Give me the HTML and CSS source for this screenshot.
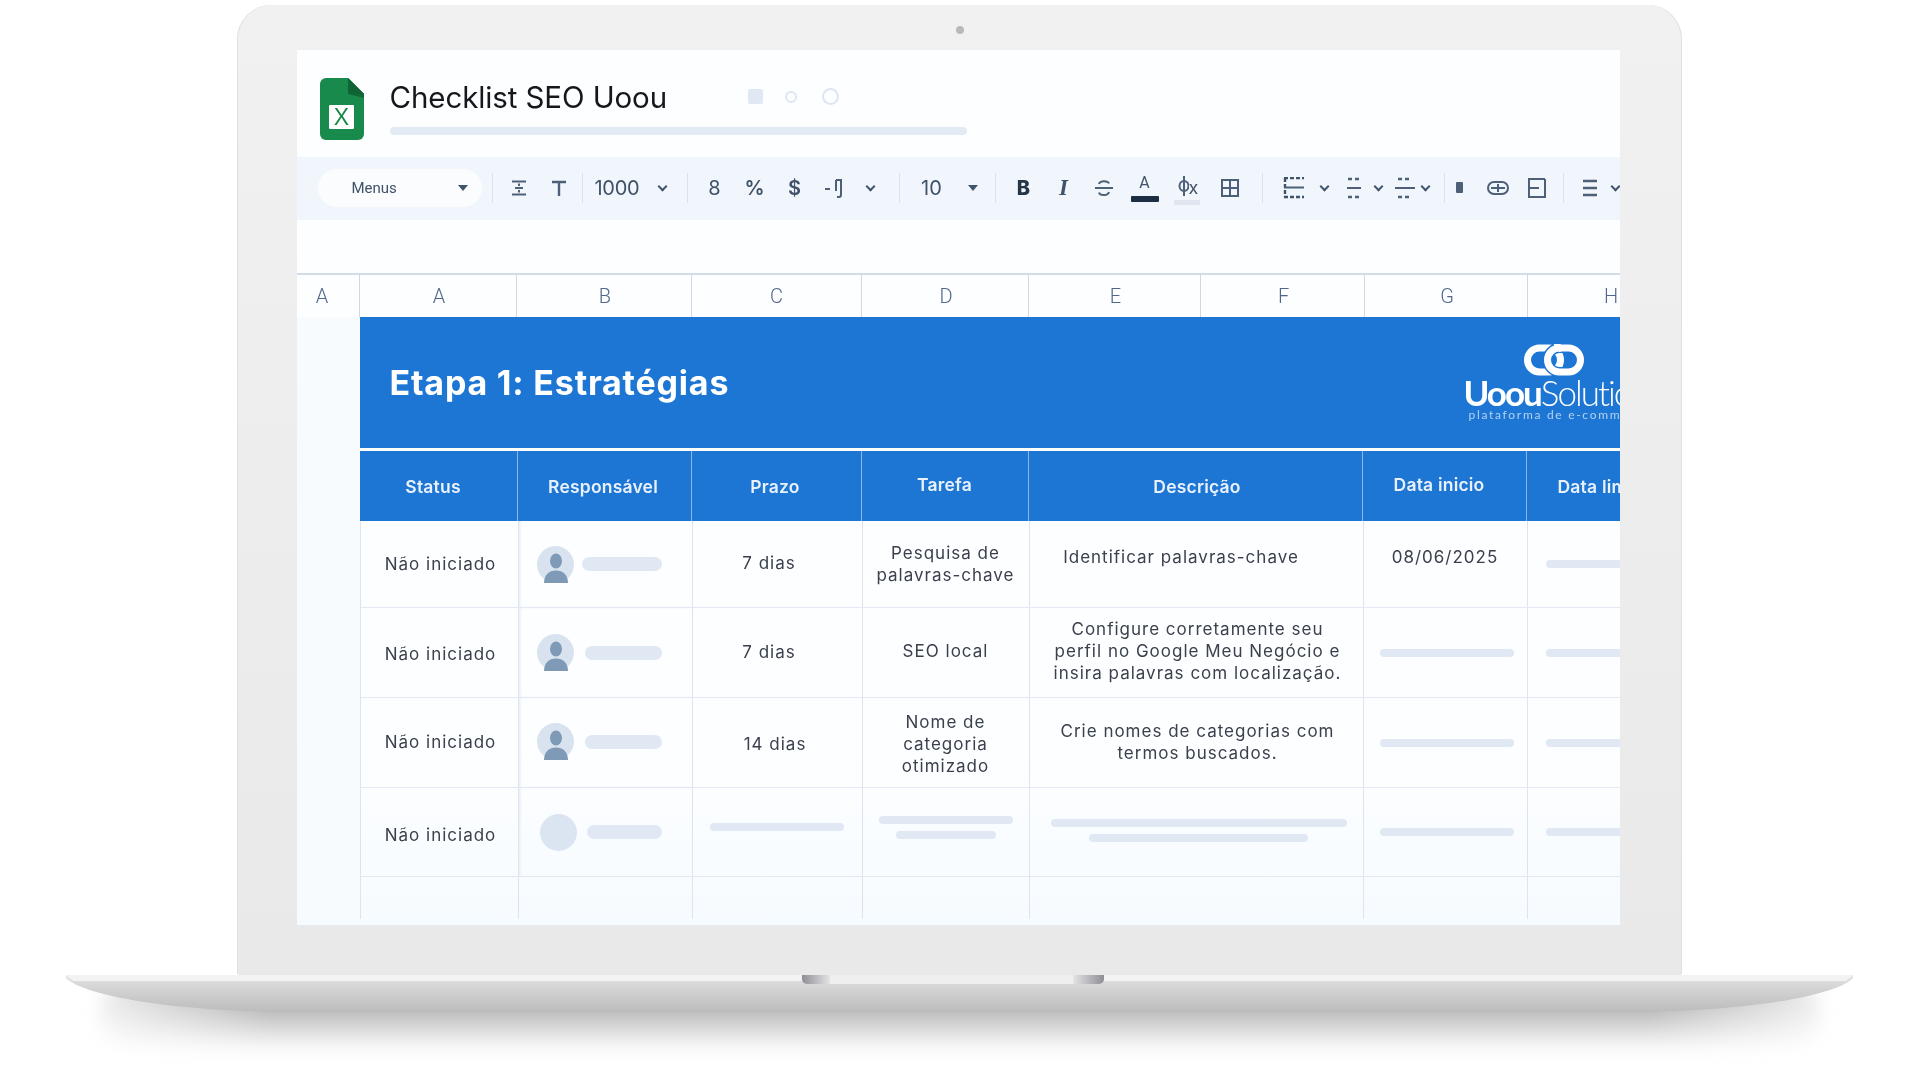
FILE: index.html
```html
<!DOCTYPE html>
<html lang="en">
<head>
    <meta charset="UTF-8">
    <title>Checklist SEO Uoou</title>
    <link rel="stylesheet" href="styles.css">
</head>
<body>
    <div class="laptop">
        <div class="lid">
            <div class="camera"></div>
            <div class="screen">
                <div class="title-row">
                    <svg class="sheet-icon" width="44" height="62" viewBox="0 0 44 62">
                        <path d="M6 0H28L44 16V56a6 6 0 0 1-6 6H6a6 6 0 0 1-6-6V6a6 6 0 0 1 6-6z" fill="#188a4b"/>
                        <path d="M28 0L44 16V20L28 16z" fill="#106a38"/>
                        <path d="M28 0L44 16H31a3 3 0 0 1-3-3z" fill="#0f6334"/>
                        <rect x="9" y="27" width="25" height="24" rx="1" fill="#fff"/>
                        <text x="21.500" y="47" text-anchor="middle" class="sheet-x">X</text>
                    </svg>
                    <div class="title-text">
                        <div class="title-line">
                            <h1>Checklist SEO Uoou</h1>
                            <span class="doc-square"></span>
                            <span class="doc-dot"></span>
                            <span class="doc-ring"></span>
                        </div>
                        <div class="menu-bar"></div>
                    </div>
                </div>

                <div class="toolbar">
                    <div class="pill">Menus<span class="caret"></span></div>
                    <span class="sep ml10"></span>
                    <span class="tool ml6">
                        <svg width="18" height="18" viewBox="0 0 18 18"><path d="M2 2.500H16M2 15.500H16M5 9H13M9 4.500V7M9 13.500V11" stroke="#4d6077" stroke-width="2" fill="none"/></svg>
                    </span>
                    <span class="tool">
                        <svg width="18" height="18" viewBox="0 0 18 18"><path d="M2 3H16M9 3V17" stroke="#4d6077" stroke-width="2.400" fill="none"/></svg>
                    </span>
                    <span class="sep ml3"></span>
                    <span class="num num-wide ml12">1000</span>
                    <span class="chev w16 ml8"></span>
                    <span class="sep ml16"></span>
                    <span class="tool txt ml7">8</span>
                    <span class="tool txt bold">%</span>
                    <span class="tool txt bold">$</span>
                    <span class="tool">
                        <svg width="22" height="20" viewBox="0 0 22 20"><path d="M1 11H6M12 2H17V17a2 2 0 0 1-2 2H13M12 2V13" stroke="#4d6077" stroke-width="2" fill="none"/></svg>
                    </span>
                    <span class="chev w16 ml8"></span>
                    <span class="sep ml20"></span>
                    <span class="tool txt ml12">10</span>
                    <span class="caret w16 ml13"></span>
                    <span class="sep ml14"></span>
                    <span class="tool txt strong ml8">B</span>
                    <span class="tool txt italic">I</span>
                    <span class="tool">
                        <svg width="20" height="22" viewBox="0 0 20 22"><path d="M1 11H19M15 6.500C14 3.500 6 3 5 7M5 15.500C6 19 14 19 15 15" stroke="#4d6077" stroke-width="2" fill="none"/></svg>
                    </span>
                    <span class="tool color-a w42">A</span>
                    <span class="tool w44 fx">
                        <svg width="12" height="24" viewBox="0 0 12 24"><ellipse cx="7" cy="10" rx="4.500" ry="5" fill="none" stroke="#4d6077" stroke-width="2"/><path d="M7 0V20" stroke="#4d6077" stroke-width="2"/></svg>x
                    </span>
                    <span class="tool">
                        <svg width="20" height="20" viewBox="0 0 20 20"><path d="M2 2H18V18H2zM10 2V18M2 10H18" stroke="#4d6077" stroke-width="2" fill="none"/></svg>
                    </span>
                    <span class="sep ml12"></span>
                    <span class="tool ml11">
                        <svg width="22" height="22" viewBox="0 0 22 22"><path d="M1 1H21M1 20H21M2 1V20" stroke="#3f5268" stroke-width="2.400" stroke-dasharray="4 2" fill="none"/><path d="M1 10.500H21" stroke="#4d6077" stroke-width="2"/></svg>
                    </span>
                    <span class="chev w16 ml3"></span>
                    <span class="tool w36 ml3">
                        <svg width="14" height="22" viewBox="0 0 14 22"><path d="M1 2H13M1 20H13" stroke="#4d6077" stroke-width="2.400" stroke-dasharray="4 3" fill="none"/><path d="M0 11H14" stroke="#4d6077" stroke-width="2"/></svg>
                    </span>
                    <span class="chev w14"></span>
                    <span class="tool w30 ml4">
                        <svg width="20" height="22" viewBox="0 0 20 22"><path d="M3 2H17M3 20H17" stroke="#4d6077" stroke-width="2.400" stroke-dasharray="4 3" fill="none"/><path d="M0 11H20" stroke="#4d6077" stroke-width="2"/></svg>
                    </span>
                    <span class="chev w12"></span>
                    <span class="sep ml12"></span>
                    <span class="tool w30"><span class="small-square"></span></span>
                    <span class="tool w46">
                        <svg width="22" height="16" viewBox="0 0 22 16"><rect x="1" y="2" width="20" height="12" rx="6" fill="none" stroke="#4d6077" stroke-width="2"/><path d="M4 8H18M11 4V12" stroke="#4d6077" stroke-width="2" fill="none"/></svg>
                    </span>
                    <span class="tool w32">
                        <svg width="18" height="20" viewBox="0 0 18 20"><path d="M17 1H1V19H17V1M1 10H11" stroke="#4d6077" stroke-width="2" fill="none"/></svg>
                    </span>
                    <span class="sep ml10"></span>
                    <span class="tool ml6">
                        <svg width="16" height="18" viewBox="0 0 16 18"><path d="M1 2H15M1 9H15M1 16H15" stroke="#4d6077" stroke-width="2.400" fill="none"/></svg>
                    </span>
                    <span class="chev w12"></span>
                </div>

                <div class="formula"></div>

                <div class="col-letters">
                    <div class="corner">A</div><div>A</div><div>B</div><div class="pr2">C</div><div>D</div><div>E</div><div>F</div><div>G</div><div>H</div>
                </div>

                <div class="sheet">
                    <div class="side"></div>
                    <div class="main">
                        <div class="banner">
                            <h2>Etapa 1: Estratégias</h2>
                            <div class="brand">
                                <svg class="rings" width="60" height="32" viewBox="0 0 60 32">
                                    <rect x="3.500" y="4" width="33" height="24" rx="12" fill="none" stroke="#fff" stroke-width="7"/>
                                    <rect x="23.500" y="4" width="33" height="24" rx="12" fill="none" stroke="#1d76d4" stroke-width="10"/>
                                    <rect x="23.500" y="4" width="33" height="24" rx="12" fill="none" stroke="#fff" stroke-width="7"/>
                                    <path d="M30 1.500C34 1 36 3 38 7" fill="none" stroke="#fff" stroke-width="6"/>
                                </svg>
                                <div class="brand-name"><b>Uoou</b>Solutions</div>
                                <div class="brand-sub">plataforma de e-commerce</div>
                            </div>
                        </div>

                        <div class="row head">
                            <div class="cell pr10 pt1">Status</div>
                            <div class="cell pr2 pt2">Responsável</div>
                            <div class="cell pr2 pt2">Prazo</div>
                            <div class="cell pb3">Tarefa</div>
                            <div class="cell pl4 pt1">Descrição</div>
                            <div class="cell pr10 pb3">Data inicio</div>
                            <div class="cell left pt2">Data limite</div>
                        </div>

                        <div class="row r87">
                            <div class="cell pb1 pl3">Não iniciado</div>
                            <div class="cell person">
                                <svg class="avatar" viewBox="0 0 37 37"><use href="#face"/></svg>
                                <span class="bar name-long"></span>
                            </div>
                            <div class="cell pr16 pb3">7 dias</div>
                            <div class="cell">Pesquisa de<br>palavras-chave</div>
                            <div class="cell pr30 pb14">Identificar palavras-chave</div>
                            <div class="cell pb14">08/06/2025</div>
                            <div class="cell left"><span class="bar end"></span></div>
                        </div>

                        <div class="row r90">
                            <div class="cell pt3 pl3">Não iniciado</div>
                            <div class="cell person">
                                <svg class="avatar" viewBox="0 0 37 37"><use href="#face"/></svg>
                                <span class="bar name"></span>
                            </div>
                            <div class="cell pr16 pb1">7 dias</div>
                            <div class="cell pb3">SEO local</div>
                            <div class="cell pb3 pl3">Configure corretamente seu<br>perfil no Google Meu Negócio e<br>insira palavras com localização.</div>
                            <div class="cell pl4"><span class="bar date"></span></div>
                            <div class="cell left"><span class="bar end"></span></div>
                        </div>

                        <div class="row r90">
                            <div class="cell pb2 pl3">Não iniciado</div>
                            <div class="cell person pb2">
                                <svg class="avatar" viewBox="0 0 37 37"><use href="#face"/></svg>
                                <span class="bar name"></span>
                            </div>
                            <div class="cell pr4 pt2">14 dias</div>
                            <div class="cell pt2">Nome de<br>categoria<br>otimizado</div>
                            <div class="cell pb2 pl3">Crie nomes de categorias com<br>termos buscados.</div>
                            <div class="cell pl4"><span class="bar date"></span></div>
                            <div class="cell left"><span class="bar end"></span></div>
                        </div>

                        <div class="row r89">
                            <div class="cell pt5 pl3">Não iniciado</div>
                            <div class="cell person person-empty">
                                <span class="avatar-empty"></span>
                                <span class="bar name-short"></span>
                            </div>
                            <div class="cell pb10"><span class="bar prazo"></span></div>
                            <div class="cell stack pb10"><span class="bar t1"></span><span class="bar t2"></span></div>
                            <div class="cell stack pb4 pl5"><span class="bar d1"></span><span class="bar d2"></span></div>
                            <div class="cell pl4"><span class="bar date"></span></div>
                            <div class="cell left"><span class="bar end"></span></div>
                        </div>

                        <div class="row r48 blank">
                            <div class="cell"></div><div class="cell"></div><div class="cell"></div><div class="cell"></div><div class="cell"></div><div class="cell"></div><div class="cell"></div>
                        </div>
                    </div>
                </div>
            </div>
        </div>

        <svg class="base" width="1920" height="105" viewBox="0 0 1920 105">
            <defs>
                <linearGradient id="baseFill" x1="0" y1="0" x2="0" y2="1">
                    <stop offset="0" stop-color="#e6e6e6"/>
                    <stop offset=".25" stop-color="#d8d8d8"/>
                    <stop offset="1" stop-color="#bcbcbc"/>
                </linearGradient>
                <linearGradient id="shadowFill" x1="0" y1="0" x2="0" y2="1">
                    <stop offset="0" stop-color="#969696"/>
                    <stop offset=".5" stop-color="#c8c8c8"/>
                    <stop offset="1" stop-color="#ffffff"/>
                </linearGradient>
                <linearGradient id="edgeFade" x1="0" y1="0" x2="1" y2="0">
                    <stop offset=".03" stop-color="#000"/>
                    <stop offset=".14" stop-color="#fff"/>
                    <stop offset=".86" stop-color="#fff"/>
                    <stop offset=".97" stop-color="#000"/>
                </linearGradient>
                <mask id="shadowMask" maskUnits="userSpaceOnUse" x="0" y="0" width="1920" height="105">
                    <rect width="1920" height="105" fill="url(#edgeFade)"/>
                </mask>
                <linearGradient id="notchLeft" x1="0" y1="0" x2="1" y2="0">
                    <stop offset="0" stop-color="#8e8e96"/>
                    <stop offset="1" stop-color="#e4e4e6"/>
                </linearGradient>
                <linearGradient id="notchRight" x1="0" y1="0" x2="1" y2="0">
                    <stop offset="0" stop-color="#e4e4e6"/>
                    <stop offset="1" stop-color="#8e8e96"/>
                </linearGradient>
                <filter id="soft" x="-5%" y="-60%" width="110%" height="220%">
                    <feGaussianBlur stdDeviation="9"/>
                </filter>
            </defs>
            <g mask="url(#shadowMask)">
                <path d="M115 10H1805C1840 30 1820 76 1780 76H140C100 76 80 30 115 10z" fill="url(#shadowFill)" filter="url(#soft)"/>
            </g>
            <path d="M66 0H1853V3C1840 18 1760 37 1622 37H300C160 37 80 18 66 3z" fill="url(#baseFill)"/>
            <path d="M66 0H1853L1846 6H73z" fill="#f3f3f3"/>
            <rect x="830" y="0" width="243" height="9" fill="#efefef"/>
            <path d="M802 0H830V9H807a5 5 0 0 1-5-5z" fill="url(#notchLeft)"/>
            <path d="M1073 0H1104V4a5 5 0 0 1-5 5H1073z" fill="url(#notchRight)"/>
        </svg>
    </div>

    <svg class="defs" width="0" height="0">
        <symbol id="face" viewBox="0 0 37 37">
            <circle cx="18.500" cy="18.500" r="18.500" fill="#d9e3f0"/>
            <ellipse cx="19" cy="15" rx="6" ry="7.500" fill="#7f9ab6"/>
            <path d="M7 37C7 29 12 24.500 19 24.500S31 29 31 37z" fill="#7f9ab6"/>
        </symbol>
    </svg>
</body>
</html>
```

FILE: styles.css
```css
*{
    box-sizing: border-box;
}
body{
    margin: 0;
    width: 1920px;
    height: 1080px;
    overflow: hidden;
    background-color: #fff;
    font-family: Inter, "Noto Sans", sans-serif;
}
.laptop{
    display: flex;
    flex-direction: column;
    align-items: center;
    padding-top: 5px;
}
.lid{
    position: relative;
    width: 1445px;
    height: 970px;
    margin-right: 2px;
    padding: 45px 62px 50px 60px;
    border-radius: 34px 34px 3px 3px;
    background: linear-gradient(#f1f1f1, #e9e9e9);
    box-shadow: inset 1px 0 0 #e0e0e0, inset -1px 0 0 #e0e0e0;
}
.camera{
    position: absolute;
    top: 21px;
    left: 719px;
    width: 8px;
    height: 8px;
    border-radius: 50%;
    background-color: #b9b9b9;
}
.screen{
    height: 875px;
    overflow: hidden;
    background: linear-gradient(#fdfeff, #fdfeff 80%, #f6fbff);
    filter: blur(.45px);
}
.base{
    flex: none;
    display: block;
}
.defs{
    position: absolute;
}

/* title */
.title-row{
    display: flex;
    height: 107px;
    padding: 28px 0 0 23px;
}
.sheet-icon{
    flex: none;
}
.sheet-x{
    font-family: "Liberation Sans", sans-serif;
    font-size: 23px;
    fill: #188a4b;
}
.title-text{
    margin-left: 26px;
    width: 577px;
}
.title-line{
    display: flex;
    align-items: center;
    height: 37px;
    margin-bottom: 12px;
}
.title-line h1{
    margin: 0;
    width: 358px;
    font-size: 29.500px;
    font-weight: 400;
    letter-spacing: -.1px;
    color: #14181d;
}
.doc-square{
    width: 15px;
    height: 15px;
    border-radius: 2px;
    background-color: #e0e8f3;
}
.doc-dot{
    width: 12px;
    height: 12px;
    margin-left: 22px;
    border: 2px solid #dde6f2;
    border-radius: 50%;
}
.doc-ring{
    width: 17px;
    height: 17px;
    margin-left: 25px;
    border: 2px solid #dde6f2;
    border-radius: 50%;
}
.menu-bar{
    height: 8px;
    border-radius: 4px;
    background-color: #e2eaf4;
}

/* toolbar */
.toolbar{
    display: flex;
    align-items: center;
    height: 63px;
    padding: 0 0 2px 21px;
    background-color: #f1f6fc;
    color: #3f5268;
    white-space: nowrap;
}
.pill{
    display: flex;
    align-items: center;
    flex: none;
    width: 164px;
    height: 38px;
    padding: 0 14px 0 34px;
    border-radius: 19px;
    background-color: #fbfcfd;
    font-family: Roboto, sans-serif;
    font-size: 15px;
}
.pill .caret{
    margin-left: auto;
}
.caret{
    display: flex;
    justify-content: center;
    flex: none;
}
.caret::after{
    content: "";
    border-top: 6px solid #40546c;
    border-left: 5.500px solid transparent;
    border-right: 5.500px solid transparent;
}
.chev{
    display: flex;
    justify-content: center;
    flex: none;
}
.chev::after{
    content: "";
    width: 5px;
    height: 5px;
    margin-top: -3px;
    border-right: 2px solid #40546c;
    border-bottom: 2px solid #40546c;
    transform: rotate(45deg);
}
.sep{
    flex: none;
    width: 1px;
    height: 30px;
    background-color: #d9e2ed;
}
.tool{
    display: flex;
    justify-content: center;
    align-items: center;
    flex: none;
    width: 40px;
}
.txt{
    font-size: 20px;
}
.bold{
    font-weight: 600;
}
.strong{
    font-weight: 800;
    color: #253548;
}
.italic{
    font-family: "Liberation Serif", serif;
    font-style: italic;
    font-weight: 700;
    font-size: 23px;
}
.num{
    flex: none;
    font-size: 20px;
}
.num-wide{
    width: 52px;
    letter-spacing: -.3px;
}
.color-a{
    flex-direction: column;
    height: 38px;
    font-family: Roboto, sans-serif;
    font-size: 16px;
}
.color-a::after{
    content: "";
    width: 28px;
    height: 6px;
    margin-top: 4px;
    border-radius: 1px;
    background-color: #1c2f42;
}
.fx{
    position: relative;
    font-size: 18px;
}
.fx::after{
    content: "";
    position: absolute;
    left: 8px;
    bottom: -5px;
    width: 26px;
    height: 5px;
    background-color: #dfe6ef;
}
.small-square{
    width: 7px;
    height: 11px;
    border-radius: 1px;
    background-color: #4d6077;
}
.w12{ width: 12px; }
.w14{ width: 14px; }
.w16{ width: 16px; }
.w30{ width: 30px; }
.w32{ width: 32px; }
.w36{ width: 36px; }
.w42{ width: 42px; }
.w44{ width: 44px; }
.w46{ width: 46px; }
.ml3{ margin-left: 3px; }
.ml4{ margin-left: 4px; }
.ml6{ margin-left: 6px; }
.ml7{ margin-left: 7px; }
.ml8{ margin-left: 8px; }
.ml10{ margin-left: 10px; }
.ml11{ margin-left: 11px; }
.ml12{ margin-left: 12px; }
.ml13{ margin-left: 13px; }
.ml14{ margin-left: 14px; }
.ml16{ margin-left: 16px; }
.ml20{ margin-left: 20px; }

.formula{
    height: 53px;
}

/* column letters */
.col-letters{
    display: grid;
    grid-template-columns: 63px 157px 175px 170px 167px 172px 164px 163px 165px;
    height: 44px;
    border-top: 2px solid #d3dbe6;
    font-family: Roboto, sans-serif;
    font-size: 20px;
    font-weight: 300;
    color: #50668a;
}
.col-letters div{
    display: flex;
    justify-content: center;
    align-items: center;
    padding-left: 3px;
    border-right: 1px solid #cfd8e4;
}
.col-letters .corner{
    padding-right: 14px;
}

/* sheet */
.sheet{
    display: flex;
    height: 602px;
}
.side{
    flex: none;
    width: 63px;
    background-color: #f7fbfe;
}
.main{
    flex: none;
    width: 1260px;
    overflow: hidden;
}
.banner{
    display: flex;
    align-items: center;
    height: 134px;
    padding: 0 0 3px 30px;
    background: linear-gradient(#1d76d4, #1d76d4);
    background-size: 100% 131px;
    background-repeat: no-repeat;
    background-color: #fff;
    color: #fff;
}
.banner h2{
    flex: none;
    width: 1075px;
    margin: 0;
    font-size: 34px;
    font-weight: 700;
    letter-spacing: .8px;
}
.brand{
    flex: none;
    align-self: flex-start;
    width: 156px;
    margin-top: 27px;
    white-space: nowrap;
}
.rings{
    display: block;
    margin-left: 59px;
}
.brand-name{
    margin: 1px 0 0 -1px;
    font-family: Lato, sans-serif;
    font-size: 35px;
    font-weight: 300;
    line-height: 30px;
    letter-spacing: -2px;
}
.brand-name b{
    font-weight: 700;
    letter-spacing: -2px;
}
.brand-sub{
    margin: 2px 0 0 4px;
    font-family: Lato, sans-serif;
    font-size: 12px;
    line-height: 12px;
    letter-spacing: 1.700px;
    color: #b3d2f2;
}
.row{
    display: grid;
    grid-template-columns: 158px 174px 170px 167px 334px 164px 165px;
    border-bottom: 1px solid #e3e9f3;
    border-left: 1px solid #dde4ef;
}
.r87{ height: 87px; }
.r90{ height: 90px; }
.r89{ height: 89px; }
.r48{ height: 48px; border-bottom: 0; }
.cell{
    display: flex;
    flex-direction: column;
    justify-content: center;
    align-items: center;
    border-right: 1px solid #dde4ef;
    font-size: 17px;
    line-height: 22px;
    letter-spacing: 1px;
    text-align: center;
    color: #3a414d;
    white-space: nowrap;
}
.row .left{
    align-items: flex-start;
    padding-left: 18px;
}
.head{
    height: 70px;
    border-bottom: 0;
    border-left: 0;
    background-color: #1d76d4;
}
.head .cell{
    border-right-color: #8db5e6;
    font-size: 17.500px;
    font-weight: 600;
    letter-spacing: .2px;
    color: #e9f2fc;
}
.head .left{
    padding-left: 31px;
}
.pr2{ padding-right: 2px; }
.pr4{ padding-right: 4px; }
.pr10{ padding-right: 10px; }
.pr16{ padding-right: 16px; }
.pr30{ padding-right: 30px; }
.pb1{ padding-bottom: 1px; }
.pb2{ padding-bottom: 2px; }
.pb3{ padding-bottom: 3px; }
.pb4{ padding-bottom: 4px; }
.pb10{ padding-bottom: 10px; }
.pb14{ padding-bottom: 14px; }
.pt1{ padding-top: 1px; }
.pt2{ padding-top: 2px; }
.pt3{ padding-top: 3px; }
.pt5{ padding-top: 5px; }
.pl3{ padding-left: 3px; }
.pl4{ padding-left: 4px; }
.pl5{ padding-left: 5px; }

.person{
    flex-direction: row;
    justify-content: flex-start;
    padding-left: 18px;
    box-shadow: inset 2px 0 2px #eef2f7;
}
.avatar{
    flex: none;
    width: 37px;
    height: 37px;
}
.avatar-empty{
    flex: none;
    width: 37px;
    height: 37px;
    margin-left: 3px;
    border-radius: 50%;
    background-color: #dbe5f1;
}
.bar{
    display: block;
    flex: none;
    height: 8px;
    border-radius: 4px;
    background-color: #e0e8f3;
}
.name-long{
    width: 80px;
    height: 14px;
    margin-left: 8px;
    border-radius: 7px;
}
.name{
    width: 77px;
    height: 14px;
    margin-left: 11px;
    border-radius: 7px;
}
.name-short{
    width: 75px;
    height: 14px;
    margin-left: 10px;
    border-radius: 7px;
}
.date{
    width: 134px;
}
.end{
    width: 120px;
}
.prazo{
    width: 134px;
}
.t1{
    width: 134px;
}
.t2{
    width: 100px;
    margin-top: 7px;
}
.d1{
    width: 296px;
}
.d2{
    width: 219px;
    margin-top: 7px;
}
```
